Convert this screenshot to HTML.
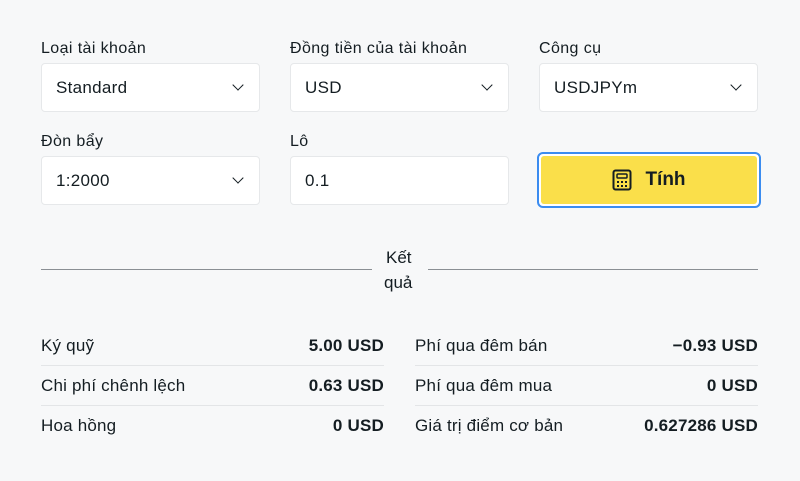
<!DOCTYPE html><html><head><meta charset="utf-8"><style>
*{margin:0;padding:0;box-sizing:border-box}
body{width:800px;height:481px;background:#f7f8f9;font-family:"Liberation Sans",sans-serif;color:#141d22;position:relative;overflow:hidden}
.l{position:absolute;font-size:16px;letter-spacing:0.4px;color:#141d22}
.in{position:absolute;width:219px;height:49px;background:#fff;border:1px solid #e6e8ea;border-radius:4px;font-size:17px;letter-spacing:0.3px;padding:14px 0 0 14px}
.ch{position:absolute;right:17px;top:17px;width:8px;height:8px;border-right:1.3px solid #141d22;border-bottom:1.3px solid #141d22;transform:rotate(45deg)}
.btn{position:absolute;left:537px;top:152px;width:224px;height:56px;border:2px solid #3b8cf0;border-radius:6px;padding:2px;background:#fff}
.btn div{width:100%;height:100%;background:#fadf4a;border-radius:3px;display:flex;align-items:center;justify-content:center;font-size:19px;font-weight:bold;gap:13px}
.hr{position:absolute;height:1px;background:#8a8f94;top:269px}
.row{position:absolute;width:343px;height:40px;font-size:17px;letter-spacing:0.2px;display:flex;justify-content:space-between;align-items:center;border-bottom:1px solid #e3e5e7}
.row b{font-weight:bold}
</style></head><body>
<div class="l" style="left:41px;top:40px">Loại tài khoản</div>
<div class="l" style="left:290px;top:40px">Đồng tiền của tài khoản</div>
<div class="l" style="left:539px;top:40px">Công cụ</div>
<div class="in" style="left:41px;top:63px">Standard<span class="ch"></span></div>
<div class="in" style="left:290px;top:63px">USD<span class="ch"></span></div>
<div class="in" style="left:539px;top:63px">USDJPYm<span class="ch"></span></div>
<div class="l" style="left:41px;top:133px">Đòn bẩy</div>
<div class="l" style="left:290px;top:133px">Lô</div>
<div class="in" style="left:41px;top:156px">1:2000<span class="ch"></span></div>
<div class="in" style="left:290px;top:156px">0.1</div>
<div class="btn"><div><svg width="20" height="22" viewBox="0 0 20 22"><rect x="1.5" y="1.5" width="17" height="19" rx="2" fill="none" stroke="#141d22" stroke-width="2"/><rect x="5" y="5" width="10" height="4" rx="1" fill="none" stroke="#141d22" stroke-width="1.5"/><g fill="#141d22"><rect x="5" y="12" width="2" height="2"/><rect x="9" y="12" width="2" height="2"/><rect x="13" y="12" width="2" height="2"/><rect x="5" y="16" width="2" height="2"/><rect x="9" y="16" width="2" height="2"/><rect x="13" y="16" width="2" height="2"/></g></svg>Tính</div></div>
<div class="hr" style="left:41px;width:331px"></div>
<div class="hr" style="left:428px;width:330px"></div>
<div class="l" style="left:386px;top:248px;font-size:17px;letter-spacing:0">Kết</div>
<div class="l" style="left:384px;top:273px;font-size:17px;letter-spacing:0">quả</div>
<div class="row" style="left:41px;top:326px"><span>Ký quỹ</span><b>5.00 USD</b></div>
<div class="row" style="left:41px;top:366px"><span>Chi phí chênh lệch</span><b>0.63 USD</b></div>
<div class="row" style="left:41px;top:406px;border:none"><span>Hoa hồng</span><b>0 USD</b></div>
<div class="row" style="left:415px;top:326px"><span>Phí qua đêm bán</span><b>−0.93 USD</b></div>
<div class="row" style="left:415px;top:366px"><span>Phí qua đêm mua</span><b>0 USD</b></div>
<div class="row" style="left:415px;top:406px;border:none"><span>Giá trị điểm cơ bản</span><b>0.627286 USD</b></div>
</body></html>
